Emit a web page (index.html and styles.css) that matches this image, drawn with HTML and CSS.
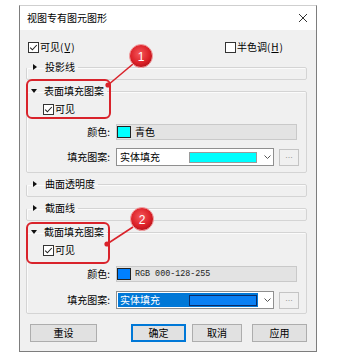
FILE: index.html
```html
<!DOCTYPE html>
<html lang="zh-CN">
<head>
    <meta charset="UTF-8" />
    <meta name="viewport" content="width=device-width, initial-scale=1.0" />
    <title>视图专有图元图形</title>
    <link rel="stylesheet" href="styles.css">
</head>
<body>
<div class="page">
    <div class="dialog">
        <div class="titlebar">
            <span class="title">视图专有图元图形</span>
            <svg class="close" width="10" height="10" viewBox="0 0 10 10"><path d="M1 1 L9 9 M9 1 L1 9" stroke="#333" stroke-width="1" fill="none"/></svg>
        </div>

        <div class="content">
            <div class="top-row">
                <label class="check">
                    <svg class="cb" width="11" height="11" viewBox="0 0 11 11"><rect x="0.5" y="0.5" width="10" height="10" fill="#fff" stroke="#333"/><path d="M2.2 5.6 L4.4 7.8 L8.8 3.0" fill="none" stroke="#222" stroke-width="1.1"/></svg>
                    可见(<u>V</u>)
                </label>
                <label class="check">
                    <svg class="cb" width="11" height="11" viewBox="0 0 11 11"><rect x="0.5" y="0.5" width="10" height="10" fill="#fff" stroke="#333"/></svg>
                    半色调(<u>H</u>)
                </label>
            </div>

            <fieldset class="group">
                <legend><span class="arrow arrow-right"></span>投影线</legend>
            </fieldset>

            <fieldset class="group group-open">
                <legend><span class="arrow arrow-down"></span>表面填充图案</legend>
                <label class="check sub-check">
                    <svg class="cb" width="11" height="11" viewBox="0 0 11 11"><rect x="0.5" y="0.5" width="10" height="10" fill="#fff" stroke="#333"/><path d="M2.2 5.6 L4.4 7.8 L8.8 3.0" fill="none" stroke="#222" stroke-width="1.1"/></svg>
                    可见
                </label>
                <div class="field-row">
                    <span class="lbl">颜色:</span>
                    <div class="color-field"><span class="swatch swatch-cyan"></span>青色</div>
                </div>
                <div class="field-row">
                    <span class="lbl">填充图案:</span>
                    <div class="select">
                        <span class="opt">实体填充<span class="pattern pattern-cyan"></span></span>
                        <svg class="chev" width="7" height="4" viewBox="0 0 7 4"><path d="M0.5 0.5 L3.5 3.5 L6.5 0.5" fill="none" stroke="#555"/></svg>
                    </div>
                    <button class="more" type="button">...</button>
                </div>
            </fieldset>

            <fieldset class="group">
                <legend><span class="arrow arrow-right"></span>曲面透明度</legend>
            </fieldset>

            <fieldset class="group">
                <legend><span class="arrow arrow-right"></span>截面线</legend>
            </fieldset>

            <fieldset class="group group-open group-last">
                <legend><span class="arrow arrow-down"></span>截面填充图案</legend>
                <label class="check sub-check">
                    <svg class="cb" width="11" height="11" viewBox="0 0 11 11"><rect x="0.5" y="0.5" width="10" height="10" fill="#fff" stroke="#333"/><path d="M2.2 5.6 L4.4 7.8 L8.8 3.0" fill="none" stroke="#222" stroke-width="1.1"/></svg>
                    可见
                </label>
                <div class="field-row">
                    <span class="lbl">颜色:</span>
                    <div class="color-field"><span class="swatch swatch-blue"></span><span class="rgb">RGB 000-128-255</span></div>
                </div>
                <div class="field-row">
                    <span class="lbl">填充图案:</span>
                    <div class="select">
                        <span class="opt opt-selected">实体填充<span class="pattern pattern-blue"></span></span>
                        <svg class="chev" width="7" height="4" viewBox="0 0 7 4"><path d="M0.5 0.5 L3.5 3.5 L6.5 0.5" fill="none" stroke="#555"/></svg>
                    </div>
                    <button class="more" type="button">...</button>
                </div>
            </fieldset>

            <div class="buttons">
                <button class="btn btn-reset" type="button">重设</button>
                <button class="btn btn-ok" type="button">确定</button>
                <button class="btn btn-cancel" type="button">取消</button>
                <button class="btn btn-apply" type="button">应用</button>
            </div>
        </div>
    </div>

    <!-- callout annotations drawn on top of the dialog -->
    <svg class="callouts" width="337" height="360" viewBox="0 0 337 360">
        <defs>
            <radialGradient id="ball" cx="45%" cy="40%" r="60%">
                <stop offset="0" stop-color="#f4575b"/>
                <stop offset="0.7" stop-color="#dc2128"/>
                <stop offset="1" stop-color="#b8141a"/>
            </radialGradient>
        </defs>
        <rect x="27" y="80" width="83" height="38" rx="5" fill="none" stroke="#d9232b" stroke-width="2"/>
        <line x1="133" y1="64" x2="108" y2="85" stroke="#d9232b" stroke-width="1.6"/>
        <circle cx="108" cy="85" r="2.6" fill="#d9232b"/>
        <circle cx="141" cy="56" r="11.5" fill="url(#ball)" stroke="#f3a3a5" stroke-width="1"/>
        <text x="141" y="60.5" class="num">1</text>

        <rect x="27" y="223" width="82" height="40" rx="5" fill="none" stroke="#d9232b" stroke-width="2"/>
        <line x1="133" y1="227" x2="107" y2="244" stroke="#d9232b" stroke-width="1.6"/>
        <circle cx="107" cy="244" r="2.6" fill="#d9232b"/>
        <circle cx="142" cy="219" r="11.5" fill="url(#ball)" stroke="#f3a3a5" stroke-width="1"/>
        <text x="142" y="223.5" class="num">2</text>
    </svg>
</div>
</body>
</html>
```

FILE: styles.css
```css
body {
    margin: 0;
    background: #fff;
    font-family: "Noto Sans CJK SC", "Noto Sans", sans-serif;
    font-size: 10px;
    line-height: 14px;
    color: #000;
}
.page {
    position: relative;
    width: 337px;
    height: 360px;
    overflow: hidden;
}
.dialog {
    box-sizing: border-box;
    width: 298px;
    margin: 5px 0 0 19px;
    border: 1px solid #7d7d7d;
    border-top-color: #cfcfcf;
    background: #f0f0f0;
}
.titlebar {
    display: flex;
    align-items: center;
    justify-content: space-between;
    height: 24px;
    padding: 0 8px 0 7px;
    background: #fff;
}
.close {
    display: block;
}
.content {
    padding: 10px 9px 9px 6px;
}
.top-row {
    display: flex;
    justify-content: space-between;
    height: 14px;
    padding: 0 24px 0 2px;
}
.check {
    display: flex;
    align-items: center;
    gap: 1px;
    height: 14px;
}
.cb {
    display: block;
}
u {
    text-decoration: underline;
    text-underline-offset: 1px;
}
/* group boxes */
.group {
    margin: 3px 0 0 0;
    padding: 0 0 4px 0;
    border: 1px solid #d4d4d4;
    border-radius: 2px;
    box-shadow: inset 1px 1px 0 #fbfbfb;
    min-width: 0;
}
.content > .group:first-of-type {
    margin-top: 5px;
}
.group legend {
    height: 16px;
    line-height: 16px;
    padding: 0 3px 0 6px;
    margin: 0;
}
.arrow {
    display: inline-block;
    width: 0;
    height: 0;
    vertical-align: middle;
    position: relative;
    top: -1px;
}
.arrow-right {
    border-left: 4px solid #111;
    border-top: 3.5px solid transparent;
    border-bottom: 3.5px solid transparent;
    margin-right: 8px;
}
.arrow-down {
    border-top: 4px solid #111;
    border-left: 3.5px solid transparent;
    border-right: 3.5px solid transparent;
    margin: 0 7px 0 -2px;
}
.group-open {
    padding-bottom: 6px;
}
.sub-check {
    margin: 3px 0 0 16px;
}
.field-row {
    display: flex;
    align-items: center;
    margin-top: 8px;
}
.group-last .field-row {
    margin-top: 9px;
}
.group-last {
    padding-bottom: 4px;
}
.lbl {
    width: 83px;
    margin-right: 6px;
    text-align: right;
}
.color-field {
    box-sizing: border-box;
    display: flex;
    align-items: center;
    width: 181px;
    height: 16px;
    background: #e3e3e3;
    border: 1px solid #c9c9c9;
}
.swatch {
    box-sizing: border-box;
    width: 14px;
    height: 12px;
    margin-right: 4px;
    border: 1px solid #222;
}
.swatch-cyan {
    background: #00ffff;
}
.swatch-blue {
    background: #0080ff;
}
.rgb {
    font-family: "Liberation Mono", monospace;
    font-size: 8.4px;
    color: #222;
}
.select {
    box-sizing: border-box;
    display: flex;
    align-items: center;
    width: 158px;
    height: 18px;
    padding: 1px;
    background: #fff;
    border: 1px solid #8f8f8f;
}
.opt {
    display: flex;
    align-items: center;
    width: 140px;
    height: 14px;
    padding-left: 2px;
    box-sizing: border-box;
}
.opt-selected {
    background: #0078d7;
    color: #fff;
}
.pattern {
    box-sizing: border-box;
    width: 68px;
    height: 11px;
    margin-left: auto;
    margin-right: 1px;
}
.pattern-cyan {
    background: #00ffff;
    border: 1px solid #9a9a9a;
}
.pattern-blue {
    background: #0a80f4;
    border: 1px solid #0c2c66;
}
.chev {
    display: block;
    margin-left: 6px;
}
.more {
    box-sizing: border-box;
    width: 20px;
    height: 17px;
    margin-left: 5px;
    padding: 0 0 4px 0;
    background: #f0f0f0;
    border: 1px solid #c4c4c4;
    color: #9a9a9a;
    font-family: "Liberation Sans", sans-serif;
    font-size: 9px;
    line-height: 10px;
}
/* bottom buttons */
.buttons {
    display: flex;
    margin-top: 10px;
    padding-left: 4px;
}
.btn {
    box-sizing: border-box;
    height: 18px;
    padding: 0;
    background: #e1e1e1;
    border: 1px solid #adadad;
    font-family: "Noto Sans CJK SC", sans-serif;
    font-size: 10px;
    line-height: 14px;
    color: #000;
}
.btn-reset {
    width: 67px;
}
.btn-ok {
    width: 55px;
    margin-left: 34px;
    border: 2px solid #0078d7;
}
.btn-cancel {
    width: 50px;
    margin-left: 6px;
}
.btn-apply {
    width: 55px;
    margin-left: 10px;
}
/* annotation layer */
.callouts {
    position: absolute;
    top: 0;
    left: 0;
    pointer-events: none;
}
.num {
    fill: #fff;
    font-family: "Liberation Sans", sans-serif;
    font-size: 12px;
    text-anchor: middle;
}
```
